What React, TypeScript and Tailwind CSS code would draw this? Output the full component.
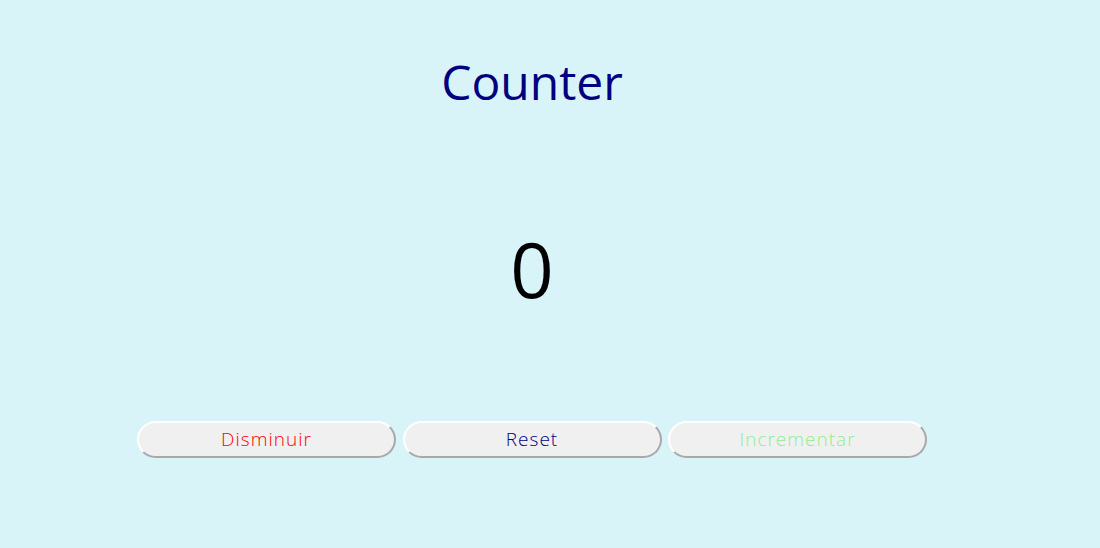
import { useState } from 'react';

export default function App() {
  const [count, setCount] = useState(0);

  const btn =
    'w-[259px] h-[37px] rounded-full bg-[#f0f0f0] border-2 border-t-white border-l-white border-r-[#a9a9a9] border-b-[#a9a9a9] text-[19px] tracking-[1px] font-light leading-none';

  return (
    <div className="min-h-[548px] w-full bg-[#d9f4f9]" style={{ fontFamily: '"Open Sans", sans-serif' }}>
      <div className="w-[1064px] flex flex-col items-center">
        <h1 className="mt-[52px] text-[48px] leading-[60px] text-[#000080]">Counter</h1>
        <div className="mt-[114px] text-[76px] leading-[86px] text-black">{count}</div>
        <div className="mt-[109px] flex gap-[6.5px]">
          <button className={`${btn} text-[#ff0000]`} onClick={() => setCount(count - 1)}>
            Disminuir
          </button>
          <button className={`${btn} text-[#000080]`} onClick={() => setCount(0)}>
            Reset
          </button>
          <button className={`${btn} text-[#90ee90]`} onClick={() => setCount(count + 1)}>
            Incrementar
          </button>
        </div>
      </div>
    </div>
  );
}
